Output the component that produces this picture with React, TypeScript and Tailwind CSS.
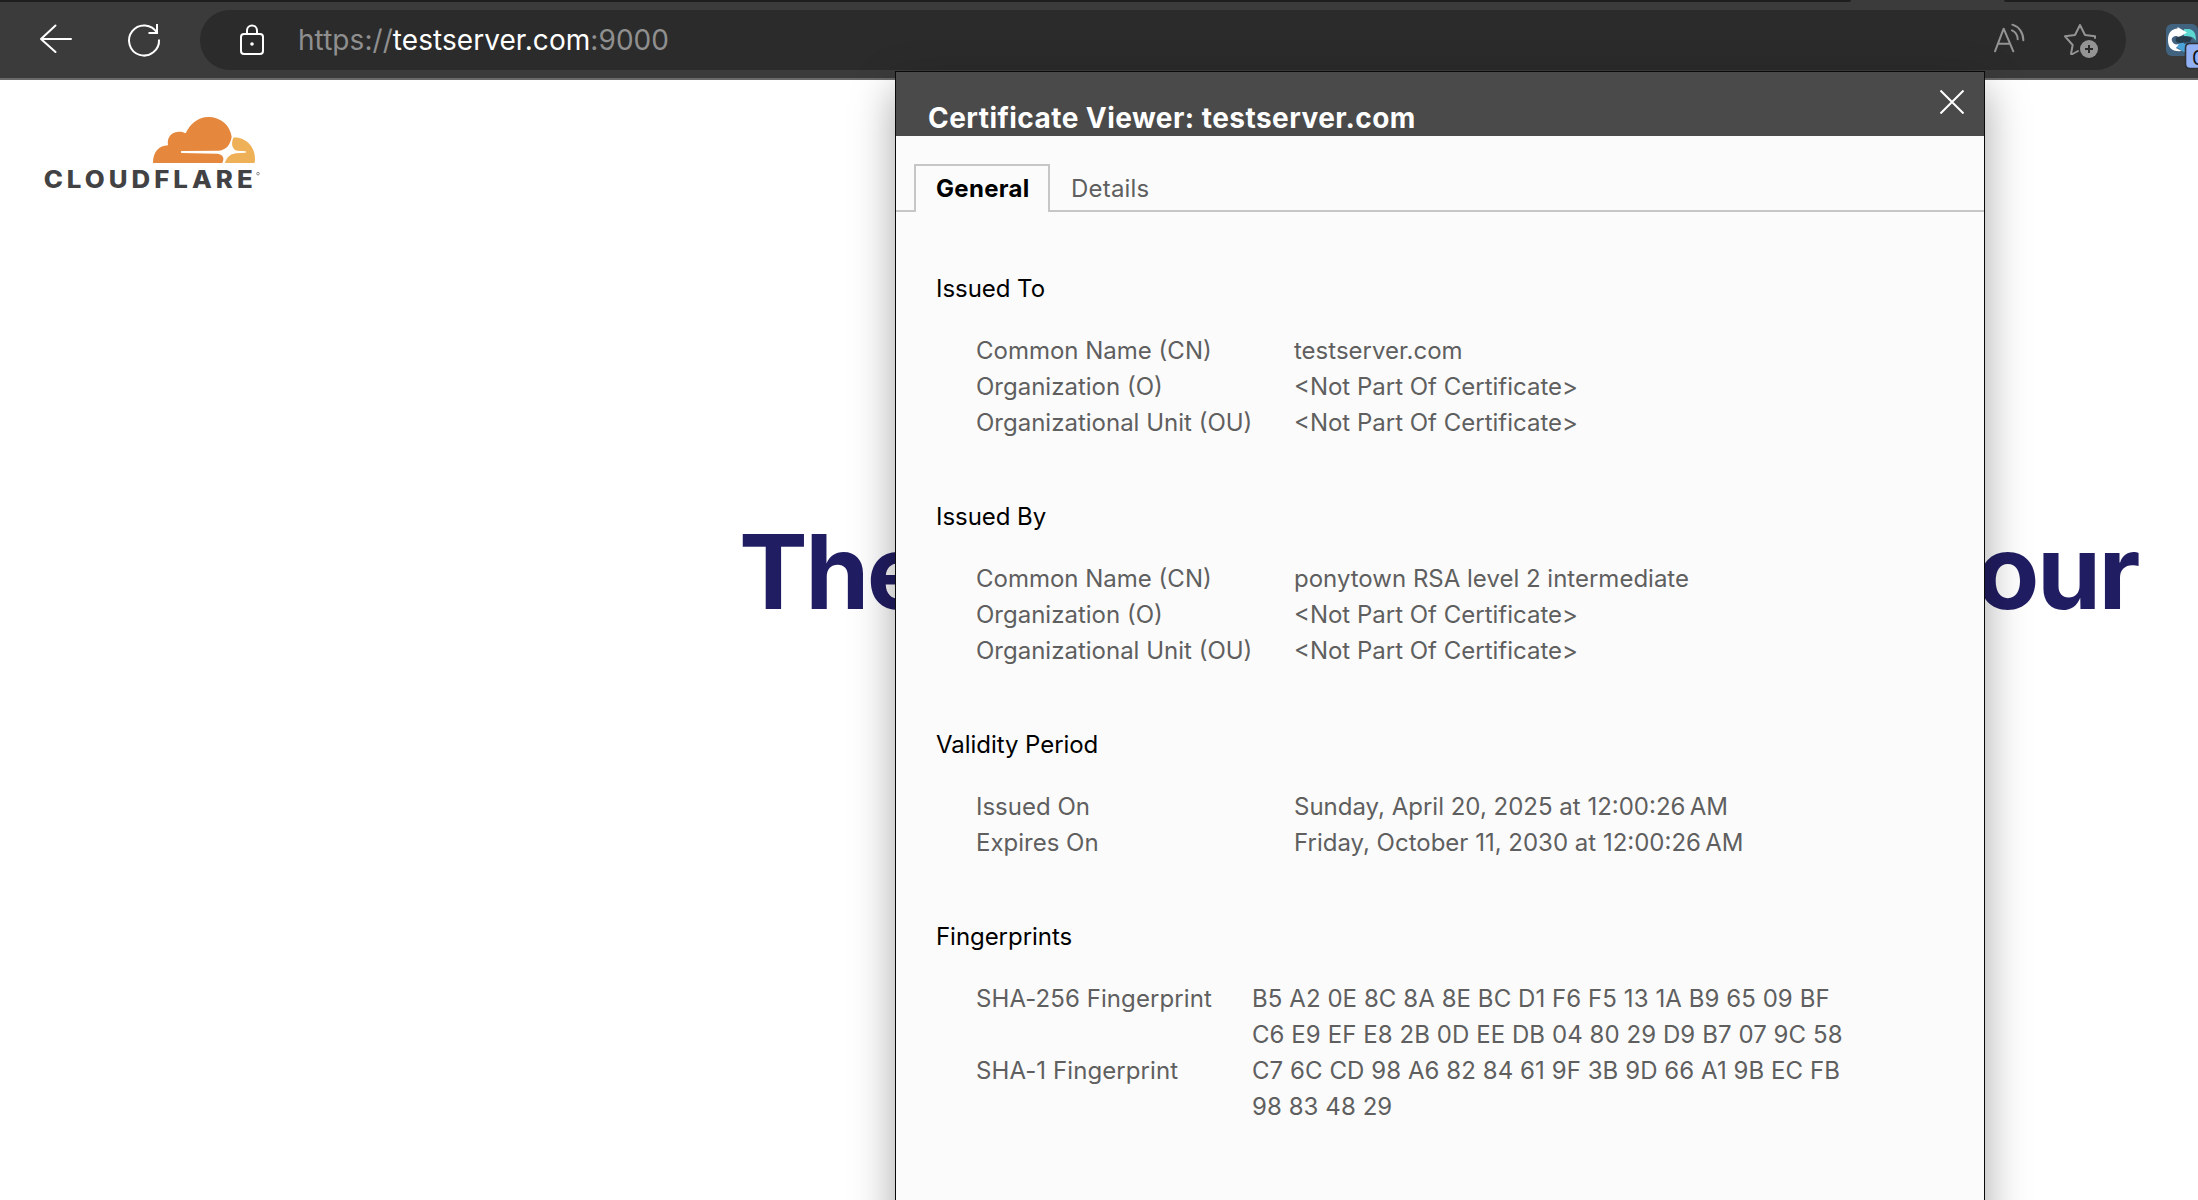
import type { ReactNode } from 'react';

type Row = { label: string; value: ReactNode };

const NOT_PART = '<Not Part Of Certificate>';

function Section({ title, children }: { title: string; children: ReactNode }) {
  return (
    <section className="pb-[58px]">
      <h2 className="tracking-[-0.05px] text-black">{title}</h2>
      <div className="flex flex-col pt-[26px] pl-10">{children}</div>
    </section>
  );
}

function Rows({ rows }: { rows: Row[] }) {
  return (
    <>
      {rows.map((row) => (
        <div key={row.label} className="flex">
          <span className="w-[318px] shrink-0">{row.label}</span>
          <span className="whitespace-nowrap">{row.value}</span>
        </div>
      ))}
    </>
  );
}

function Fingerprint({ label, lines }: { label: string; lines: string[] }) {
  return (
    <div className="flex">
      <span className="w-[276px] shrink-0 tracking-[0.08px]">{label}</span>
      <div className="flex flex-col whitespace-nowrap tracking-[0.07px]">
        {lines.map((line) => (
          <span key={line}>{line}</span>
        ))}
      </div>
    </div>
  );
}

function CloudflareLogo() {
  return (
    <svg className="block h-[110px] w-[260px]" viewBox="0 0 780 330">
      <path
        fill="#e5873d"
        d="M399 189C399 156 417 137 444 136C439 107 461 94 479 95C486 95 492 97 497 100C510 72 534 51 565 51C602 51 630 75 635 110C632 130 622 149 596 152L484 153Q481 156 484 159L592 161Q612 163 610 180L607 189Z"
      />
      <path
        fill="#efb157"
        d="M640 113C676 110 707 140 705 180Q705 186 703 189H615C619 174 630 162 648 160L677 158Q680 156 677 154L652 152C637 149 632 132 640 113Z"
      />
      <text
        x="71"
        y="265"
        fontSize="71"
        fontWeight="800"
        fill="#424244"
        letterSpacing="11"
        textLength="639"
        lengthAdjust="spacingAndGlyphs"
        fontFamily="Inter, sans-serif"
      >
        CLOUDFLARE
      </text>
      <circle cx="714" cy="221" r="4" fill="none" stroke="#8a8a8c" strokeWidth="3" />
    </svg>
  );
}

function NavIcons() {
  return (
    <svg
      className="block h-[78px] w-[180px] shrink-0"
      viewBox="0 0 180 78"
      fill="none"
      stroke="#fff"
      strokeWidth="2"
      strokeLinecap="round"
      strokeLinejoin="round"
    >
      <path d="M55.500 25.500L41 39L55.500 52M41 39H71" />
      <path
        d="M157 33A15 15 0 1 0 159 39.500M157 24V33H148.500"
        strokeLinecap="butt"
        strokeLinejoin="miter"
      />
    </svg>
  );
}

function LockIcon() {
  return (
    <svg className="block h-[32px] w-[26px]" viewBox="0 0 26 32" fill="none" stroke="#fff" strokeWidth="2">
      <rect x="2" y="10" width="22" height="20" rx="3" />
      <path d="M8 10V6.500a5 5 0 0 1 10 0V10" />
      <circle cx="13" cy="20" r="1.800" fill="#fff" stroke="none" />
    </svg>
  );
}

function AddressActions() {
  return (
    <svg
      className="block h-[60px] w-[130px]"
      viewBox="0 0 390 180"
      fill="none"
      stroke="#949494"
      strokeWidth="6"
      strokeLinecap="round"
      strokeLinejoin="round"
    >
      <path d="M45 124L71 56L100 124M54 101H90" />
      <path d="M97 44C117 50 130 68 130 91M96 61C107 66 113 75 113 88" />
      <path d="M345 84V79L315 75L300 45L285 75L255 79L278 105L273 132H278L294 123" />
      <circle cx="327" cy="117" r="27" fill="#949494" stroke="none" />
      <path d="M327 105V129M315 117H339" stroke="#2b2b2b" strokeLinecap="butt" />
    </svg>
  );
}

function ExtensionIcon() {
  return (
    <svg className="block h-[78px] w-[34px]" viewBox="0 0 34 78">
      <rect x="2" y="24" width="32" height="32" rx="6" fill="#426380" />
      <path fill="#5dd8d0" d="M20 29H25C30 30 32 33 32 41C30 37 27 36 20 36Z" />
      <path fill="#4aa3d8" d="M11 46L20 41V44H32V52H20Z" />
      <path
        fill="#fff"
        d="M13.500 28.500L13.500 27L23 32.500L13.500 38V36C9 36 7 38 8 41C9 44 12 45 15 44L12 48L18 51C8 52 4 48 4 40C4 32 8 29 13.500 28.500Z"
      />
      <path fill="#263b4c" d="M13 37C17 36 24 36 28 38L26 42L17 43C12 43 10 40 13 37Z" />
      <path
        fill="#92b1f5"
        stroke="#2d3035"
        strokeWidth="1.600"
        d="M36 43.500H26Q21.500 43.500 21.500 48V64Q21.500 68.500 26 68.500H36Z"
      />
      <text x="28" y="64.500" fontSize="20" fill="#101318" fontFamily="Inter, sans-serif">
        0
      </text>
    </svg>
  );
}

function Toolbar() {
  return (
    <header className="flex h-20 shrink-0 flex-col border-b-2 border-[#6a6a6a] bg-[#3b3b3b]">
      <div className="flex h-[2px] shrink-0 justify-between">
        <div className="h-[2px] w-[1851px] rounded-br-sm bg-[#1e1e1e]" />
        <div className="h-[2px] w-[194px] rounded-bl-sm bg-[#1e1e1e]" />
      </div>
      <div className="-mt-[2px] flex h-[78px] items-center">
        <NavIcons />
        <div className="mt-[2px] ml-5 flex h-[60px] w-[1926px] items-center rounded-full bg-[#2b2b2b] pl-[39px]">
          <LockIcon />
          <p className="ml-[33px] text-[28px] leading-[36px] tracking-[0.06px] whitespace-nowrap text-[#8f8f8f]">
            https://<span className="text-white">testserver.com</span>:9000
          </p>
          <div className="mr-[16px] ml-auto">
            <AddressActions />
          </div>
        </div>
        <div className="ml-auto">
          <ExtensionIcon />
        </div>
      </div>
    </header>
  );
}

function CertificateDialog() {
  return (
    <div
      role="dialog"
      aria-label="Certificate Viewer"
      className="absolute top-[71px] left-[895px] h-[1200px] w-[1090px] border border-[#0a0a0a] bg-[#fbfbfb] text-2xl leading-[36px] text-[#5f5f5f] shadow-[0_18px_40px_rgba(0,0,0,0.36)]"
    >
      <div className="flex h-16 justify-between bg-[#4a4a4a] pt-[28px] pr-[20px] pl-[32px]">
        <h1 className="text-[28px] leading-[36px] font-bold tracking-[0.45px] whitespace-nowrap text-white">
          Certificate Viewer: testserver.com
        </h1>
        <svg className="-mt-[10px] h-6 w-6" viewBox="0 0 24 24" fill="none" stroke="#fff" strokeWidth="2">
          <path d="M0.500 0.500L23.500 23.500M23.500 0.500L0.500 23.500" />
        </svg>
      </div>
      <div className="flex pt-[28px]">
        <div className="w-[18px] border-b-2 border-[#c6c6c6]" />
        <div className="h-12 w-[136px] border-2 border-b-0 border-[#c6c6c6] pt-[5px] pl-5 font-bold tracking-[0.3px] text-black">
          General
        </div>
        <div className="h-12 flex-1 border-b-2 border-[#c6c6c6] pt-[7px] pl-[21px] tracking-[0.2px]">
          Details
        </div>
      </div>
      <div className="pt-[59px] pl-10">
        <Section title="Issued To">
          <Rows
            rows={[
              { label: 'Common Name (CN)', value: 'testserver.com' },
              { label: 'Organization (O)', value: NOT_PART },
              { label: 'Organizational Unit (OU)', value: NOT_PART },
            ]}
          />
        </Section>
        <Section title="Issued By">
          <Rows
            rows={[
              { label: 'Common Name (CN)', value: 'ponytown RSA level 2 intermediate' },
              { label: 'Organization (O)', value: NOT_PART },
              { label: 'Organizational Unit (OU)', value: NOT_PART },
            ]}
          />
        </Section>
        <Section title="Validity Period">
          <Rows
            rows={[
              {
                label: 'Issued On',
                value: 'Sunday, April 20, 2025 at 12:00:26\u202fAM',
              },
              {
                label: 'Expires On',
                value: 'Friday, October 11, 2030 at 12:00:26\u202fAM',
              },
            ]}
          />
        </Section>
        <Section title="Fingerprints">
          <Fingerprint
            label="SHA-256 Fingerprint"
            lines={[
              'B5 A2 0E 8C 8A 8E BC D1 F6 F5 13 1A B9 65 09 BF',
              'C6 E9 EF E8 2B 0D EE DB 04 80 29 D9 B7 07 9C 58',
            ]}
          />
          <Fingerprint
            label="SHA-1 Fingerprint"
            lines={['C7 6C CD 98 A6 82 84 61 9F 3B 9D 66 A1 9B EC FB', '98 83 48 29']}
          />
        </Section>
      </div>
    </div>
  );
}

export default function App() {
  return (
    <div className="relative flex h-[1200px] w-[2198px] flex-col overflow-hidden bg-white font-['Inter',sans-serif]">
      <Toolbar />
      <main className="flex flex-col">
        <div className="pt-5 pl-5">
          <CloudflareLogo />
        </div>
        <div className="flex justify-between pt-[299px] pr-[60px] pl-[739px] text-[103px] leading-[125px] font-bold tracking-[-2.5px] text-[#211d63]">
          <span>The</span>
          <span>our</span>
        </div>
      </main>
      <CertificateDialog />
    </div>
  );
}
